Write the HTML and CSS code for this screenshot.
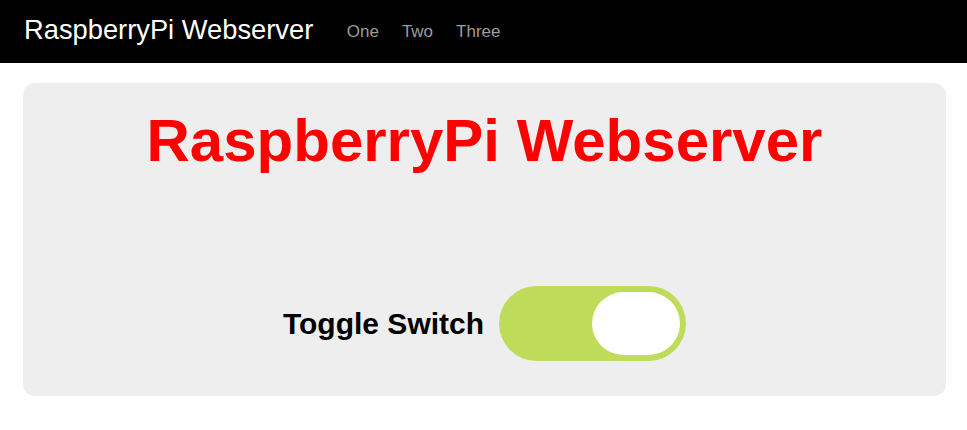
FILE: index.html
```html
<!DOCTYPE html>
<html lang="en">
<head>
<meta charset="utf-8">
<title>RaspberryPi Webserver</title>
<link rel="stylesheet" href="styles.css">
</head>
<body>
<nav class="navbar">
  <a class="brand" href="#">RaspberryPi Webserver</a>
  <ul class="nav-links">
    <li><a href="#">One</a></li>
    <li><a href="#">Two</a></li>
    <li><a href="#">Three</a></li>
  </ul>
</nav>
<main class="page">
  <section class="jumbotron">
    <h1 class="title">RaspberryPi Webserver</h1>
    <div class="toggle-row">
      <span class="toggle-label">Toggle Switch</span>
      <label class="switch">
        <input type="checkbox" checked>
        <span class="knob"></span>
      </label>
    </div>
  </section>
</main>
</body>
</html>
```

FILE: styles.css
```css
* { box-sizing: border-box; }

html, body {
  margin: 0;
  padding: 0;
  background: #ffffff;
  font-family: "Liberation Sans", Arial, Helvetica, sans-serif;
}

.navbar {
  height: 63px;
  background: #000000;
  display: flex;
  align-items: center;
  padding: 0 0 0 24px;
}

.brand {
  color: #ffffff;
  text-decoration: none;
  font-size: 27.3px;
  line-height: 30px;
  padding-bottom: 3px;
}

.nav-links {
  list-style: none;
  margin: 0 0 0 22px;
  padding: 0;
  display: flex;
}

.nav-links a {
  display: block;
  color: #9d9d9d;
  text-decoration: none;
  font-size: 17px;
  line-height: 20px;
  padding: 0 11.5px;
}

.page {
  padding: 20px 21px 0 23px;
}

.jumbotron {
  background: #eeeeee;
  border-radius: 12px;
  padding: 25px 0 35px;
  text-align: center;
}

.title {
  margin: 0;
  color: #ff0000;
  font-size: 60px;
  font-weight: bold;
  line-height: 66px;
}

.toggle-row {
  margin-top: 112px;
  display: flex;
  justify-content: center;
  align-items: center;
  gap: 15px;
}

.toggle-label {
  font-size: 30px;
  font-weight: bold;
  color: #000000;
}

.switch {
  position: relative;
  display: block;
  width: 187px;
  height: 75px;
  border-radius: 38px;
  background: #bedb5a;
  padding: 6px 6px 6px 93px;
  cursor: pointer;
}

.switch input {
  position: absolute;
  opacity: 0;
  width: 0;
  height: 0;
}

.knob {
  display: block;
  width: 88px;
  height: 63px;
  border-radius: 32px;
  background: #ffffff;
}
```
